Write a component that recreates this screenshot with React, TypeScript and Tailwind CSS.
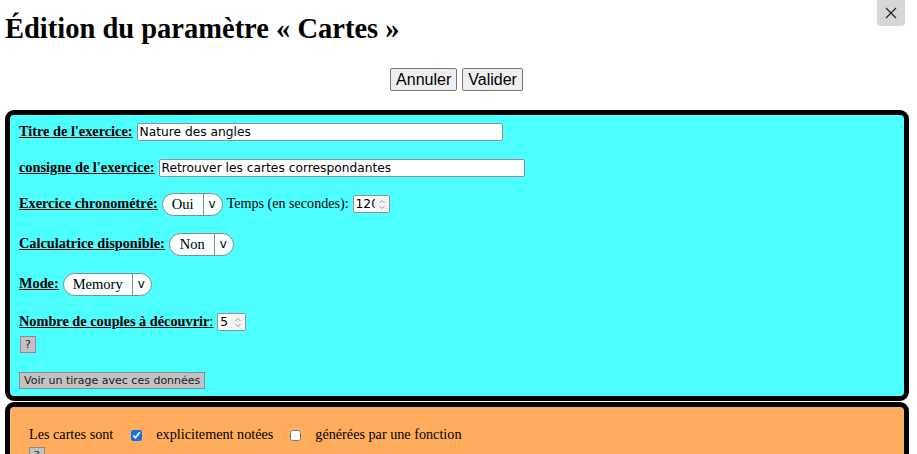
import React from "react";

const serif = "font-['Liberation_Serif','Times_New_Roman',serif]";
const ui = "font-['DejaVu_Sans','Tahoma',sans-serif]";

function Label({ children }: { children: React.ReactNode }) {
  return <span className={`${serif} font-bold underline text-[14.3px] mr-[4px]`}>{children}</span>;
}

function TextField({ value, width }: { value: string; width: number }) {
  return (
    <span
      className={`${ui} inline-flex items-center h-[18px] border border-[#8f8f9d] bg-white pl-[2px] text-[12.25px] text-black rounded-[2px]`}
      style={{ width }}
    >
      {value}
    </span>
  );
}

function PillSelect({ value, padL }: { value: string; padL: number }) {
  return (
    <span className="inline-flex items-stretch h-[23px] rounded-full border border-[#8a8a8a] bg-[#f8ffff] overflow-hidden">
      <span className={`${serif} flex items-center text-[14.5px] pr-[9px] pt-[2px]`} style={{ paddingLeft: padL }}>
        {value}
      </span>
      <span className="w-px bg-[#8a8a8a]" />
      <span className={`${ui} flex items-center text-[12px] pl-[5px] pr-[6px]`}>v</span>
    </span>
  );
}

function Spinner() {
  return (
    <svg width="8" height="13" viewBox="0 0 8 13" className="shrink-0">
      <path d="M1.5 5 L4 2.5 L6.5 5" fill="none" stroke="#9a9a9a" strokeWidth="1" />
      <path d="M1.5 8 L4 10.5 L6.5 8" fill="none" stroke="#9a9a9a" strokeWidth="1" />
    </svg>
  );
}

function NumberField({ value, width }: { value: string; width: number }) {
  return (
    <span
      className="inline-flex items-center h-[18px] border border-[#8f8f9d] bg-white rounded-[2px] overflow-hidden"
      style={{ width }}
    >
      <span className={`${ui} flex-1 overflow-hidden whitespace-nowrap pl-[2px] text-[12.25px] text-black`}>{value}</span>
      <span className="flex items-center justify-center h-full w-[14px] bg-[#f3f3f3]">
        <Spinner />
      </span>
    </span>
  );
}

function GrayButton({ children }: { children: React.ReactNode }) {
  return (
    <button
      className={`${ui} flex items-center h-[17px] px-[4px] border border-[#8c8c8c] bg-[#c2c2c2] text-[11px] text-[#1a1a1a] leading-none`}
    >
      {children}
    </button>
  );
}

function Row({ children, className = "" }: { children: React.ReactNode; className?: string }) {
  return <div className={`flex items-center h-[24px] ${className}`}>{children}</div>;
}

export default function App() {
  return (
    <div className="relative w-full min-h-[600px] bg-white text-black">
      <button className="absolute top-0 right-[12px] w-[28px] h-[26px] rounded-b-[4px] bg-[#d6d6d6] flex items-center justify-center">
        <svg width="12" height="12" viewBox="0 0 12 12">
          <path d="M1 1 L11 11 M11 1 L1 11" stroke="#222" strokeWidth="1.2" />
        </svg>
      </button>

      <h1 className={`${serif} font-bold text-[28.5px] leading-[32px] pl-[5px] pt-[13px]`}>
        Édition du paramètre « Cartes »
      </h1>

      <div className="flex justify-center gap-[5px] mt-[23px] pr-[4px]">
        {["Annuler", "Valider"].map((t) => (
          <button
            key={t}
            className="font-['Liberation_Sans',Arial,sans-serif] text-[16px] leading-[19px] px-[5px] py-[1px] border border-[#767676] rounded-[2px] bg-[#efefef]"
          >
            {t}
          </button>
        ))}
      </div>

      <div className="ml-[5px] mr-[8px] mt-[19px] border-[5px] border-black rounded-[9px] bg-[#4dffff] pl-[9px] pt-[5px] pb-[7px]">
        <Row>
          <Label>Titre de l'exercice:</Label>
          <TextField value="Nature des angles" width={366} />
        </Row>
        <Row className="mt-[12px]">
          <Label>consigne de l'exercice:</Label>
          <TextField value="Retrouver les cartes correspondantes" width={366} />
        </Row>
        <Row className="mt-[12px]">
          <Label>Exercice chronométré:</Label>
          <PillSelect value="Oui" padL={9} />
          <span className={`${serif} text-[14.1px] ml-[4px] mr-[4px]`}>Temps (en secondes):</span>
          <NumberField value="120" width={37} />
        </Row>
        <Row className="mt-[16px]">
          <Label>Calculatrice disponible:</Label>
          <PillSelect value="Non" padL={10} />
        </Row>
        <Row className="mt-[16px]">
          <Label>Mode:</Label>
          <PillSelect value="Memory" padL={9} />
        </Row>
        <Row className="mt-[14px]">
          <span className={`${serif} font-bold underline text-[14.3px]`}>Nombre de couples à découvrir</span>
          <span className={`${serif} text-[14.3px] underline mr-[4px]`}>:</span>
          <NumberField value="5" width={29} />
        </Row>
        <div className="flex mt-[2px] pl-[1px]">
          <GrayButton>?</GrayButton>
        </div>
        <div className="flex mt-[19px]">
          <GrayButton>Voir un tirage avec ces données</GrayButton>
        </div>
      </div>

      <div className="ml-[5px] mr-[8px] mt-px border-[5px] border-black rounded-[9px] bg-[#ffad5c] pl-[19px] pt-[19px] pb-[40px]">
        <div className={`${serif} flex items-center h-[18px] text-[14.2px]`}>
          <span>Les cartes sont</span>
          <input type="checkbox" defaultChecked className="w-[11px] h-[11px] ml-[18px] mr-[14px] accent-[#1a6fe0]" />
          <span>explicitement notées</span>
          <input type="checkbox" className="w-[11px] h-[11px] ml-[17px] mr-[14px]" />
          <span>générées par une fonction</span>
        </div>
        <div className="flex mt-[3px]">
          <GrayButton>?</GrayButton>
        </div>
      </div>
    </div>
  );
}
